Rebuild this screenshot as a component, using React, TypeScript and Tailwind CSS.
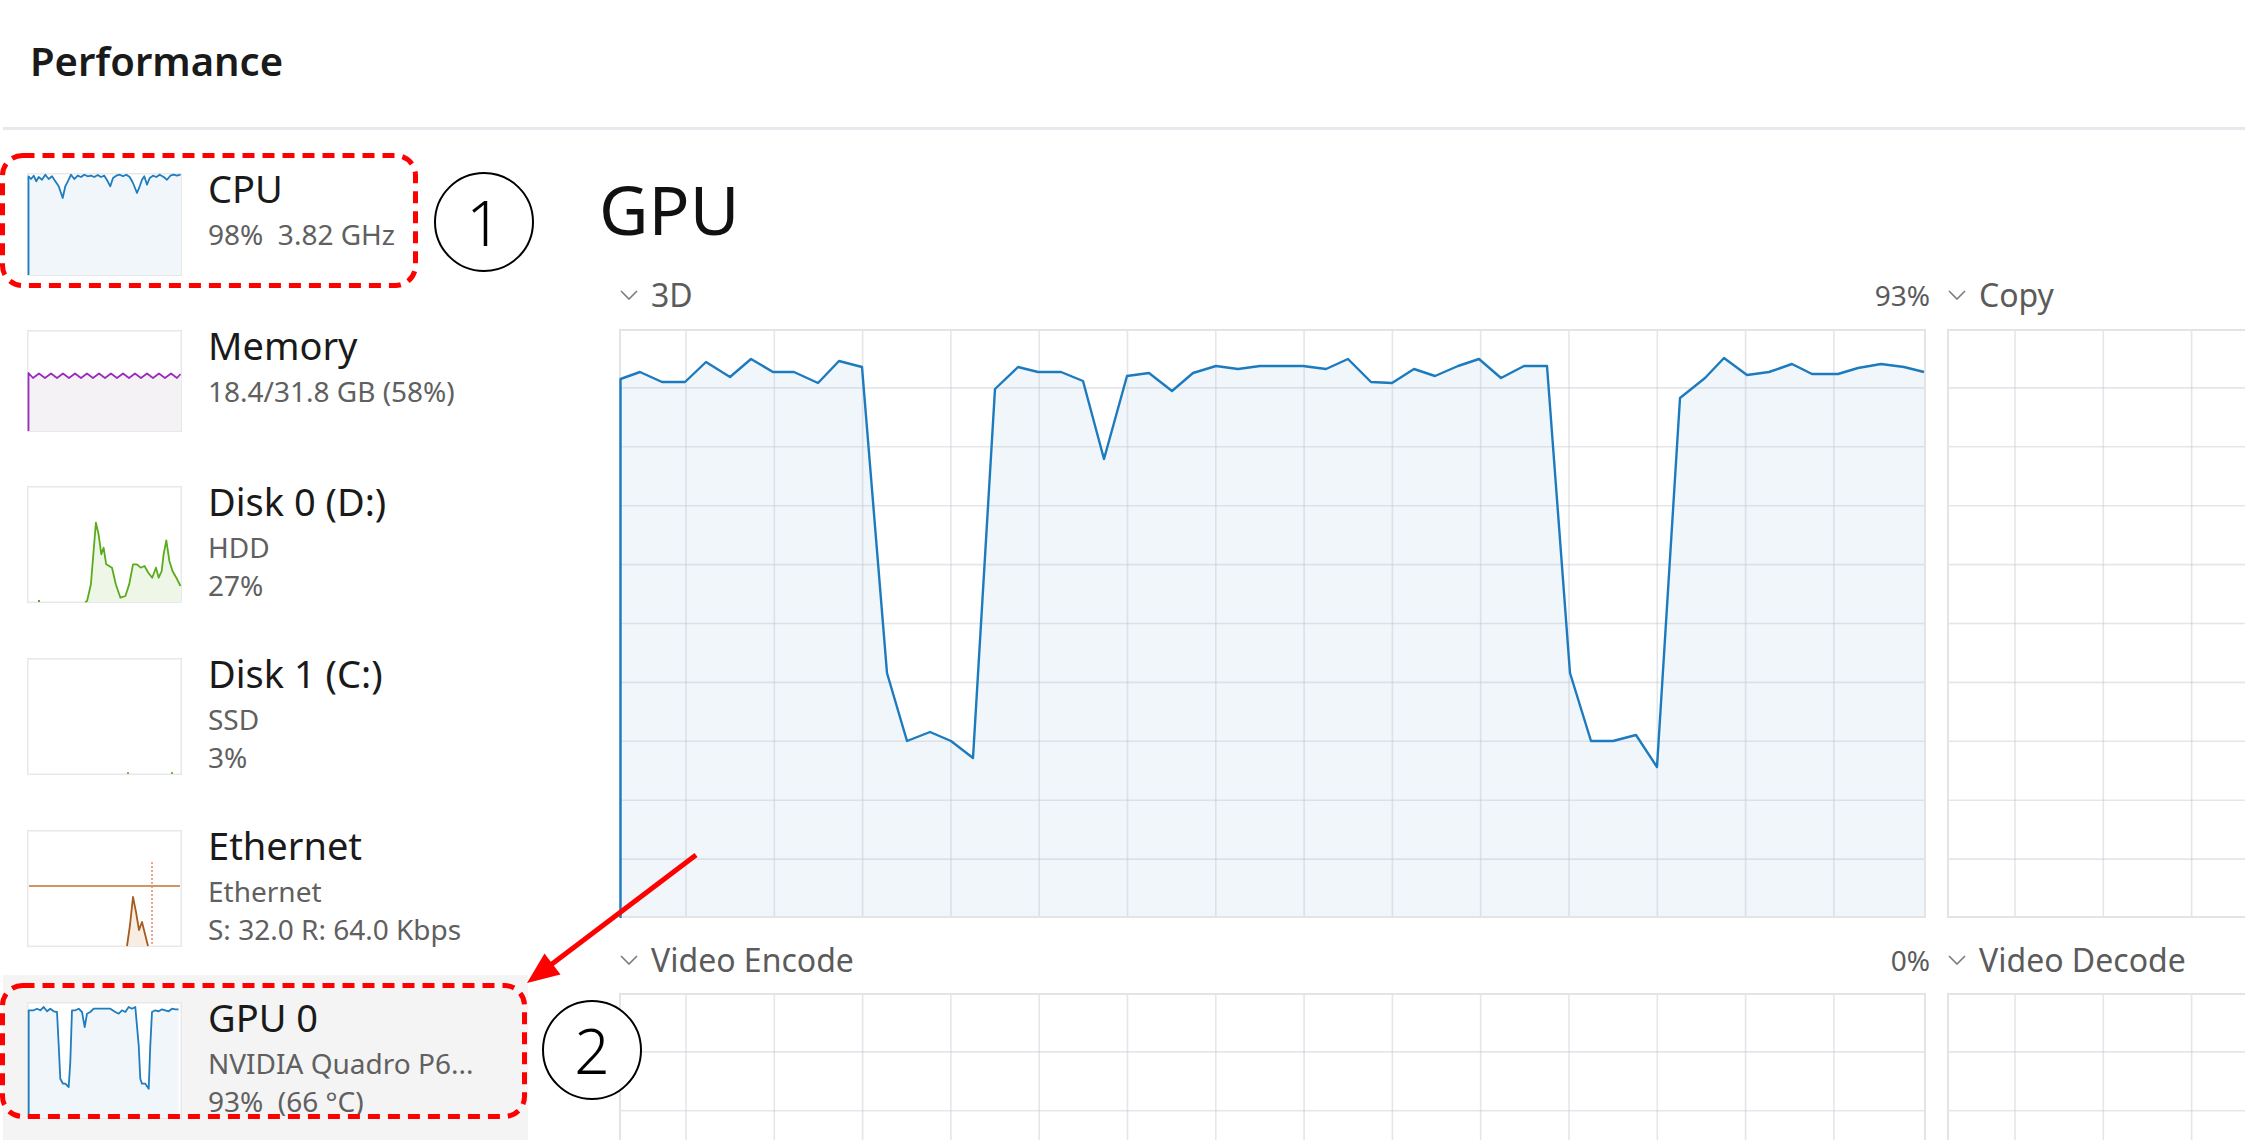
import React from "react";

type Pt = [number, number];
const line = (pts: Pt[]) => pts.map((p, i) => `${i ? "L" : "M"}${p[0]} ${p[1]}`).join(" ");
const area = (pts: Pt[], bottom: number) =>
  `${line(pts)} L${pts[pts.length - 1][0]} ${bottom} L${pts[0][0]} ${bottom} Z`;

const cpuPts: Pt[] = [
  [1.5, 102], [1.5, 3.3], [4, 6], [6.7, 2.7], [9.3, 8.3], [11.7, 4], [15, 6.7], [18.3, 1.7], [21.7, 6], [25, 3.3],
  [28.3, 8.3], [31.7, 13.3], [35.7, 25], [38.3, 13.3], [41.7, 6.7], [44, 1.7], [47.3, 6], [50.7, 2.7], [54, 4],
  [57.3, 1.7], [60.7, 3.3], [64, 2.7], [67.3, 4], [70.7, 2], [74, 4], [77.3, 2.7], [80.7, 8.3], [83.3, 13.3],
  [86, 5], [89.3, 2.7], [92.7, 1.7], [96, 3.3], [99.3, 1.7], [102.7, 4], [106, 10], [110, 20], [112.7, 13.3],
  [115, 6.7], [117.3, 3.3], [120, 11.7], [122.7, 5], [126, 2.7], [129.3, 4], [132.7, 1.7], [136.7, 4], [140, 6.7],
  [143.3, 2.7], [146.7, 1.7], [150, 2.7], [153.5, 1.7],
];

const memPts: Pt[] = (() => {
  const p: Pt[] = [[1.5, 101], [1.5, 43]];
  let k = 0;
  for (let x = 6; x < 154; x += 6) {
    p.push([x, k % 2 === 0 ? 48 : 43.5]);
    k++;
  }
  p.push([153.5, 44]);
  return p;
})();

const disk0Pts: Pt[] = [
  [58, 116], [60.1, 115], [63.9, 98.3], [68.9, 36.7], [71.6, 48.3], [74.3, 68.3], [76.6, 61.7], [79.2, 78.3],
  [85, 81.7], [88.8, 98.3], [93.4, 111.7], [98.4, 110], [102.2, 98.3], [106, 78.3], [109.9, 78.3], [113.7, 81.7],
  [117.5, 80], [121.3, 86.7], [125.2, 91.7], [129, 81.7], [131.7, 91.7], [134.7, 85], [136.6, 68.3], [139.3, 54.3],
  [142.4, 75], [145.5, 85], [149.3, 91.7], [153.5, 100],
];

const gpuThumbPts: Pt[] = [
  [1.7, 116], [1.7, 8.3], [6.7, 8.3], [10, 6.7], [13.3, 8.3], [16.7, 5], [20, 9.3], [23.3, 6.7], [26.7, 9.3],
  [30, 10], [31.7, 43.3], [33.3, 76.7], [36, 81.7], [38.3, 81.7], [41.7, 85], [43.3, 60], [45, 8.3], [48.3, 8.3],
  [51.7, 6.7], [55, 10], [57.7, 25], [60, 11.7], [63.3, 10], [66.7, 6.7], [70, 6.7], [76.7, 6.7], [83.3, 6.7],
  [88.3, 10], [91.7, 11.7], [95, 8.3], [98.3, 10], [101.7, 5], [105, 6.7], [108.3, 5], [111.7, 43.3],
  [113.3, 76.7], [115, 81.7], [118.3, 81.7], [121.7, 86.7], [123.3, 43.3], [125, 10], [128.3, 8.3], [131.7, 9.3],
  [135, 7.3], [138.3, 8.3], [141.7, 9.3], [145, 6.7], [148.3, 7.3], [151.5, 7.3],
];

const ethPts: Pt[] = [
  [100, 116], [103, 95], [106, 67], [109, 82], [112, 100], [115, 92], [118, 104], [121, 116],
];

const gpu3d: Pt[] = [
  [1.5, 589], [1.5, 50], [21, 43], [43, 53], [66, 53], [87, 33], [111, 48], [132, 30], [154, 43], [175, 43], [199, 54],
  [220, 32], [243, 38], [268, 344], [288, 412], [311, 403], [332, 412], [354, 429], [376, 60], [399, 38], [419, 43],
  [442, 43], [464, 52], [485, 130], [508, 47], [530, 44], [553, 62], [574, 44], [597, 37], [619, 40], [641, 37],
  [663, 37], [684, 37], [707, 40], [729, 30], [752, 53], [773, 54], [795, 40], [816, 47], [839, 37], [860, 30],
  [882, 49], [905, 37], [928, 37], [951, 344], [972, 412], [994, 412], [1017, 406], [1038, 438], [1061, 69],
  [1086, 49], [1105, 29], [1128, 46], [1150, 43], [1173, 35], [1193, 45], [1219, 45], [1239, 39], [1262, 35],
  [1285, 38], [1305, 43],
];

function ThumbFrame({ h, children }: { h: number; children?: React.ReactNode }) {
  return (
    <svg width={155} height={h} viewBox={`0 0 155 ${h}`} className="block shrink-0">
      <rect x={0} y={0} width={155} height={h} fill="#ffffff" />
      <rect x={0.75} y={0.75} width={153.5} height={h - 1.5} fill="none" stroke="#e8e8e8" strokeWidth={1.5} />
      {children}
    </svg>
  );
}

function CpuThumb() {
  return (
    <ThumbFrame h={103}>
      <path d={area(cpuPts, 102)} fill="#f1f6fa" />
      <path d={line(cpuPts)} fill="none" stroke="#1f7cbf" strokeWidth={1.8} strokeLinejoin="round" />
    </ThumbFrame>
  );
}

function MemThumb() {
  return (
    <ThumbFrame h={102}>
      <path d={area(memPts, 101)} fill="#f4f2f5" />
      <path d={line(memPts)} fill="none" stroke="#9a2dbd" strokeWidth={1.8} strokeLinejoin="round" />
    </ThumbFrame>
  );
}

function Disk0Thumb() {
  return (
    <ThumbFrame h={117}>
      <path d={area(disk0Pts, 116)} fill="#eef6e8" />
      <path d={line(disk0Pts)} fill="none" stroke="#5aab1c" strokeWidth={1.8} strokeLinejoin="round" />
      <rect x={11} y={114} width={2} height={2} fill="#5aab1c" />
    </ThumbFrame>
  );
}

function Disk1Thumb() {
  return (
    <ThumbFrame h={117}>
      <rect x={100} y={114} width={2} height={2} fill="#6cbf3a" />
      <rect x={144} y={114} width={2} height={2} fill="#6cbf3a" />
    </ThumbFrame>
  );
}

function EthThumb() {
  return (
    <ThumbFrame h={117}>
      <line x1={2} y1={56} x2={153} y2={56} stroke="#cf9563" strokeWidth={2} />
      <path d={area(ethPts, 116)} fill="#f7ede3" />
      <path d={line(ethPts)} fill="none" stroke="#a65a1e" strokeWidth={1.8} strokeLinejoin="round" />
      <line x1={125} y1={32} x2={125} y2={116} stroke="#e58a63" strokeWidth={1.5} strokeDasharray="2 2" />
    </ThumbFrame>
  );
}

function GpuThumb() {
  return (
    <ThumbFrame h={117}>
      <path d={area(gpuThumbPts, 116)} fill="#f1f6fa" />
      <path d={line(gpuThumbPts)} fill="none" stroke="#1f7cbf" strokeWidth={1.8} strokeLinejoin="round" />
    </ThumbFrame>
  );
}

function BigChart({ data, height = 589, offset = 67 }: { data?: Pt[]; height?: number; offset?: number }) {
  const width = 1307;
  const vs: number[] = [];
  for (let x = offset; x < width - 4; x += 88.3) vs.push(x);
  const hs: number[] = [];
  for (let k = 1; k < 10; k++) hs.push((k * 589) / 10);
  return (
    <svg width={width} height={height} viewBox={`0 0 ${width} ${height}`} className="block">
      <rect x={0} y={0} width={width} height={height} fill="#ffffff" />
      {data && <path d={area(data, 589)} fill="#f1f6fb" />}
      {vs.map((x) => (
        <line key={"v" + x} x1={x} y1={0} x2={x} y2={589} stroke="rgba(190,196,204,0.42)" strokeWidth={1.6} />
      ))}
      {hs.map((y) => (
        <line key={"h" + y} x1={0} y1={y} x2={width} y2={y} stroke="rgba(190,196,204,0.42)" strokeWidth={1.6} />
      ))}
      <rect x={1} y={1} width={width - 2} height={587} fill="none" stroke="#e4e4e4" strokeWidth={2} />
      {data && (
        <path d={line(data)} fill="none" stroke="#1c7bbf" strokeWidth={2.4} strokeLinejoin="round" />
      )}
    </svg>
  );
}

function Chevron() {
  return (
    <svg width={18} height={10} viewBox="0 0 18 10" className="block shrink-0">
      <path d="M1 1 L9 9 L17 1" fill="none" stroke="#7a7a7a" strokeWidth={1.6} />
    </svg>
  );
}

function ChartHeader({ label, pct }: { label: string; pct?: string }) {
  return (
    <div className="flex items-center h-[36px] pl-[1px]">
      <Chevron />
      <span className="ml-[13px] text-[32px] leading-[36px] text-[#5b5b5b]">{label}</span>
      {pct && <span className="ml-auto -mr-[4px] text-[28px] leading-[36px] text-[#5b5b5b]">{pct}</span>}
    </div>
  );
}

function SideItem({
  thumb,
  title,
  subs,
  selected,
}: {
  thumb: React.ReactNode;
  title: string;
  subs: string[];
  selected?: boolean;
}) {
  return (
    <div className={`flex items-start pl-[24px] py-[27px] ${selected ? "bg-[#f4f4f4]" : ""}`}>
      {thumb}
      <div className="ml-[26px] flex flex-col">
        <div className="text-[38px] leading-[30px] text-[#1a1a1a] whitespace-nowrap">{title}</div>
        <div className="mt-[12px] flex flex-col">
          {subs.map((s) => (
            <div key={s} className="text-[28px] leading-[38px] text-[#606060] whitespace-pre">
              {s}
            </div>
          ))}
        </div>
      </div>
    </div>
  );
}

function CircleNum({ n, className }: { n: string; className: string }) {
  return (
    <div
      className={`absolute w-[100px] h-[100px] rounded-full border-[2.5px] border-black bg-white flex items-center justify-center ${className}`}
    >
      <span className="font-['Noto_Sans','Open_Sans',sans-serif] font-light text-[62px] leading-none text-black">
        {n}
      </span>
    </div>
  );
}

export default function App() {
  return (
    <div className="relative w-[2245px] h-[1140px] overflow-hidden bg-white font-['Noto_Sans','Open_Sans',sans-serif]">
      <div className="h-[127px] pl-[30px] pt-[37px]">
        <div className="text-[40px] leading-[48px] font-semibold text-[#1a1a1a]">Performance</div>
      </div>
      <div className="ml-[3px] h-[3px] bg-[#e6e9ed]" />
      <div className="flex">
        <div className="ml-[3px] w-[525px] shrink-0 pt-[16px]">
          <SideItem thumb={<CpuThumb />} title="CPU" subs={["98%  3.82 GHz"]} />
          <SideItem thumb={<MemThumb />} title="Memory" subs={["18.4/31.8 GB (58%)"]} />
          <SideItem thumb={<Disk0Thumb />} title="Disk 0 (D:)" subs={["HDD", "27%"]} />
          <SideItem thumb={<Disk1Thumb />} title="Disk 1 (C:)" subs={["SSD", "3%"]} />
          <SideItem thumb={<EthThumb />} title="Ethernet" subs={["Ethernet", "S: 32.0 R: 64.0 Kbps"]} />
          <SideItem thumb={<GpuThumb />} title="GPU 0" subs={["NVIDIA Quadro P6...", "93%  (66 °C)"]} selected />
        </div>
        <div className="flex-1 min-w-0 pl-[71px]">
          <div className="mt-[44px] text-[68px] leading-[70px] text-[#111111]">GPU</div>
          <div className="mt-[33px] pl-[20px] grid grid-cols-[1307px_1307px] gap-x-[21px]">
            <ChartHeader label="3D" pct="93%" />
            <ChartHeader label="Copy" />
            <div className="mt-[16px]">
              <BigChart data={gpu3d} />
            </div>
            <div className="mt-[16px]">
              <BigChart offset={68} />
            </div>
            <div className="mt-[24px]">
              <ChartHeader label="Video Encode" pct="0%" />
            </div>
            <div className="mt-[24px]">
              <ChartHeader label="Video Decode" />
            </div>
            <div className="mt-[15px]">
              <BigChart />
            </div>
            <div className="mt-[15px]">
              <BigChart offset={68} />
            </div>
          </div>
        </div>
      </div>

      <svg className="absolute inset-0 pointer-events-none" width={2245} height={1140} viewBox="0 0 2245 1140">
        <rect x={2.5} y={155.5} width={413} height={130} rx={20} fill="none" stroke="#ff0000" strokeWidth={5} strokeDasharray="12 8" />
        <rect x={2.5} y={985.5} width={522} height={131} rx={20} fill="none" stroke="#ff0000" strokeWidth={5} strokeDasharray="12 8" />
        <line x1={696} y1={855} x2={548} y2={967} stroke="#ff0000" strokeWidth={5} />
        <polygon points="527,983 560.5,974.5 544.5,953.5" fill="#ff0000" />
      </svg>
      <CircleNum n="1" className="left-[434px] top-[172px]" />
      <CircleNum n="2" className="left-[542px] top-[1000px]" />
    </div>
  );
}
